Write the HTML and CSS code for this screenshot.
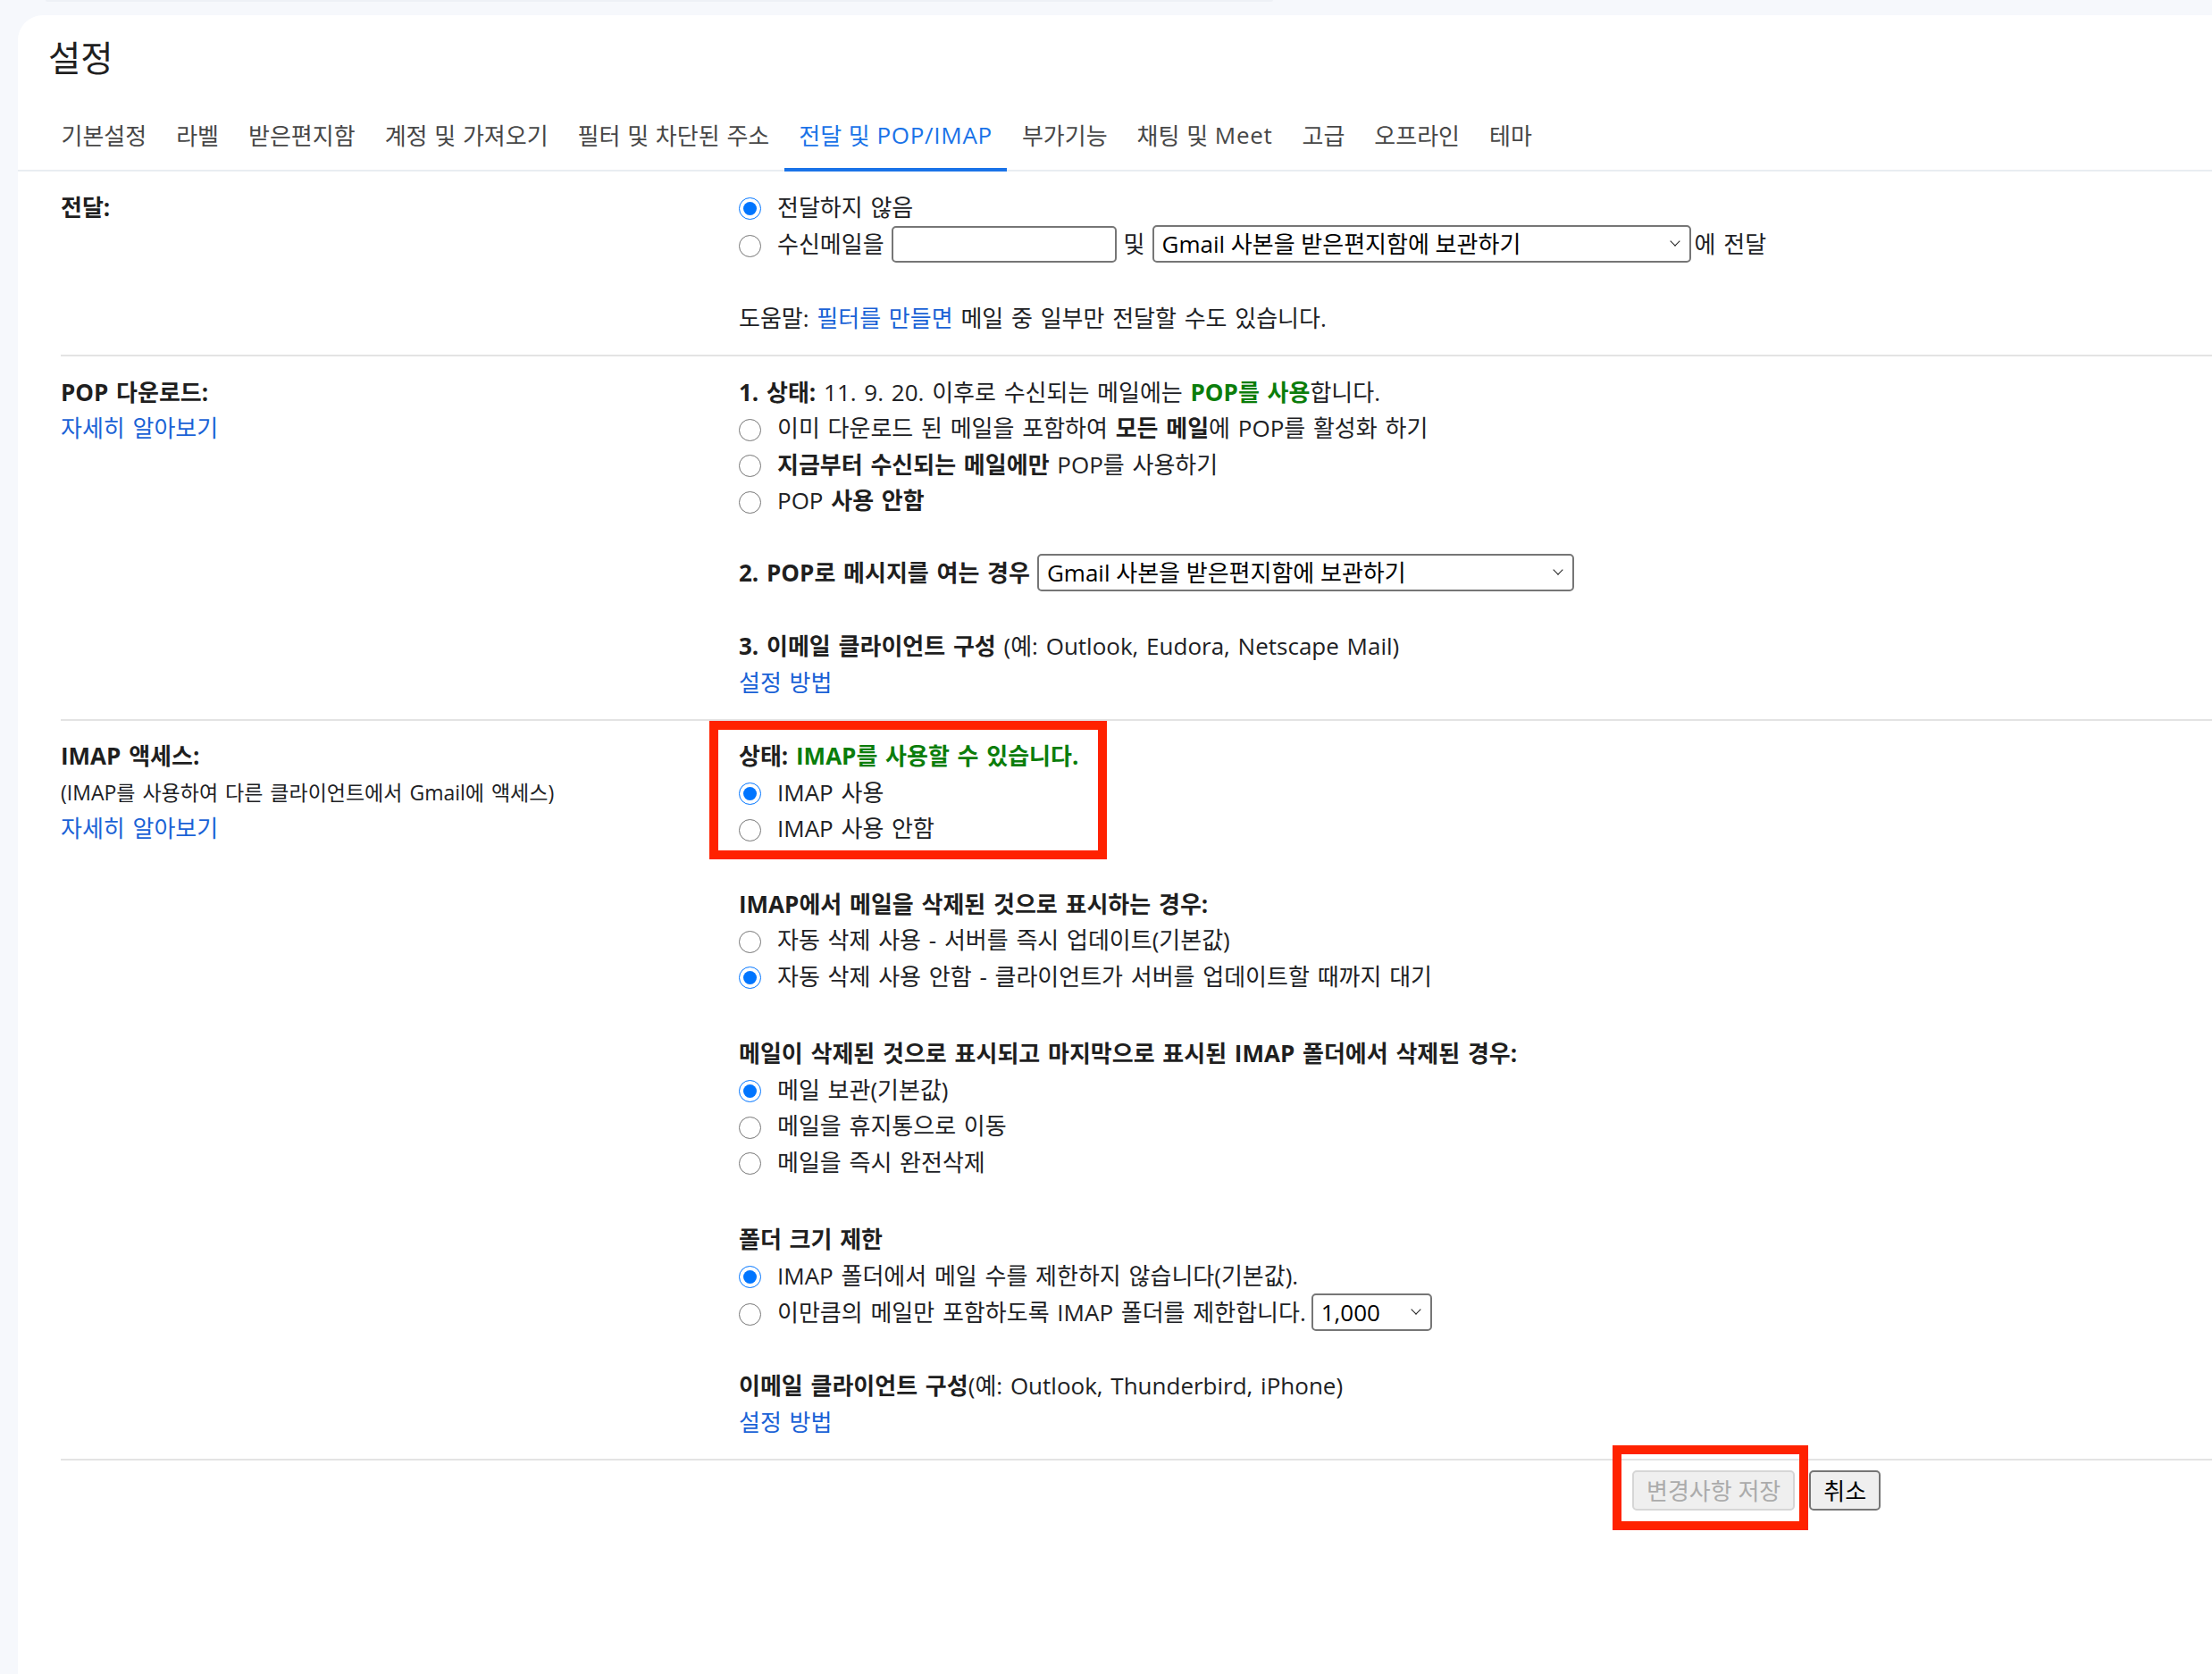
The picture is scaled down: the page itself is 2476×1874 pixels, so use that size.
FILE: index.html
```html
<!DOCTYPE html>
<html lang="ko">
<head>
<meta charset="utf-8">
<title>설정</title>
<link rel="stylesheet" href="styles.css">
</head>
<body>
<div class="topstrip"></div>
<main class="card">
  <h1 class="title">설정</h1>
  <nav class="tabs">
    <div class="tab">기본설정</div>
    <div class="tab">라벨</div>
    <div class="tab">받은편지함</div>
    <div class="tab">계정 및 가져오기</div>
    <div class="tab">필터 및 차단된 주소</div>
    <div class="tab active">전달 및 <span class="lat">POP/IMAP</span></div>
    <div class="tab">부가기능</div>
    <div class="tab">채팅 및 <span class="lat">Meet</span></div>
    <div class="tab">고급</div>
    <div class="tab">오프라인</div>
    <div class="tab">테마</div>
  </nav>

  <div class="content">
    <section class="section">
      <div class="label">
        <div class="line"><b>전달:</b></div>
      </div>
      <div class="field">
        <label class="opt"><input type="radio" name="fwd" checked><span>전달하지 않음</span></label>
        <label class="opt">
          <input type="radio" name="fwd">
          <span class="controls">
            <span>수신메일을</span>
            <input type="text" class="textbox">
            <span>및</span>
            <span class="select-wrap sel-fwd"><select><option>Gmail 사본을 받은편지함에 보관하기</option></select></span>
            <span class="tight">에 전달</span>
          </span>
        </label>
        <div class="line help">도움말: <a href="#">필터를 만들면</a> 메일 중 일부만 전달할 수도 있습니다.</div>
      </div>
    </section>

    <section class="section">
      <div class="label">
        <div class="line"><b>POP 다운로드:</b></div>
        <div class="line"><a href="#">자세히 알아보기</a></div>
      </div>
      <div class="field">
        <div class="group">
          <div class="line"><b>1. 상태:</b> 11. 9. 20. 이후로 수신되는 메일에는 <b class="green">POP를 사용</b>합니다.</div>
          <label class="opt"><input type="radio" name="pop"><span>이미 다운로드 된 메일을 포함하여 <b>모든 메일</b>에 POP를 활성화 하기</span></label>
          <label class="opt"><input type="radio" name="pop"><span><b>지금부터 수신되는 메일에만</b> POP를 사용하기</span></label>
          <label class="opt"><input type="radio" name="pop"><span>POP <b>사용 안함</b></span></label>
        </div>
        <div class="group gap-pop1">
          <div class="controls">
            <b>2. POP로 메시지를 여는 경우</b>
            <span class="select-wrap sel-pop"><select><option>Gmail 사본을 받은편지함에 보관하기</option></select></span>
          </div>
        </div>
        <div class="group gap-pop2">
          <div class="line"><b>3. 이메일 클라이언트 구성</b> (예: Outlook, Eudora, Netscape Mail)</div>
          <div class="line"><a href="#">설정 방법</a></div>
        </div>
      </div>
    </section>

    <section class="section imap">
      <div class="label">
        <div class="line"><b>IMAP 액세스:</b></div>
        <div class="line small">(IMAP를 사용하여 다른 클라이언트에서 Gmail에 액세스)</div>
        <div class="line"><a href="#">자세히 알아보기</a></div>
      </div>
      <div class="field">
        <div class="group">
          <div class="line"><b>상태: <span class="green">IMAP를 사용할 수 있습니다.</span></b></div>
          <label class="opt"><input type="radio" name="imap" checked><span>IMAP 사용</span></label>
          <label class="opt"><input type="radio" name="imap"><span>IMAP 사용 안함</span></label>
        </div>
        <div class="group gap-imap1">
          <div class="line"><b>IMAP에서 메일을 삭제된 것으로 표시하는 경우:</b></div>
          <label class="opt"><input type="radio" name="exp"><span>자동 삭제 사용 - 서버를 즉시 업데이트(기본값)</span></label>
          <label class="opt"><input type="radio" name="exp" checked><span>자동 삭제 사용 안함 - 클라이언트가 서버를 업데이트할 때까지 대기</span></label>
        </div>
        <div class="group gap-imap2">
          <div class="line"><b>메일이 삭제된 것으로 표시되고 마지막으로 표시된 IMAP 폴더에서 삭제된 경우:</b></div>
          <label class="opt"><input type="radio" name="del" checked><span>메일 보관(기본값)</span></label>
          <label class="opt"><input type="radio" name="del"><span>메일을 휴지통으로 이동</span></label>
          <label class="opt"><input type="radio" name="del"><span>메일을 즉시 완전삭제</span></label>
        </div>
        <div class="group gap-imap2">
          <div class="line"><b>폴더 크기 제한</b></div>
          <label class="opt"><input type="radio" name="lim" checked><span>IMAP 폴더에서 메일 수를 제한하지 않습니다(기본값).</span></label>
          <label class="opt">
            <input type="radio" name="lim">
            <span class="controls narrow">
              <span>이만큼의 메일만 포함하도록 IMAP 폴더를 제한합니다.</span>
              <span class="select-wrap sel-num"><select><option>1,000</option></select></span>
            </span>
          </label>
        </div>
        <div class="group gap-imap3">
          <div class="line"><b>이메일 클라이언트 구성</b>(예: Outlook, Thunderbird, iPhone)</div>
          <div class="line"><a href="#">설정 방법</a></div>
        </div>
      </div>
      <div class="highlight highlight-imap"></div>
    </section>

    <div class="actions">
      <span class="save-wrap">
        <button class="btn" disabled>변경사항 저장</button>
        <span class="highlight highlight-save"></span>
      </span>
      <button class="btn btn-cancel">취소</button>
    </div>
  </div>
</main>
</body>
</html>
```

FILE: styles.css
```css
html, body {
  margin: 0;
  padding: 0;
  overflow: hidden;
}

body {
  background: #f6f8fc;
  font-family: "Open Sans", "Noto Sans CJK KR", sans-serif;
  font-size: 26px;
  word-spacing: 2px;
  color: #202124;
}

.topstrip {
  margin-left: 51px;
  width: 1374px;
  height: 2px;
  background: #eef1f6;
  border-radius: 0 0 8px 8px;
}

.card {
  margin: 15px 0 0 20px;
  background: #ffffff;
  border-top-left-radius: 28px;
  min-height: calc(100vh - 17px);
}

.title {
  margin: 0;
  padding: 21px 0 0 34px;
  font-size: 39.5px;
  line-height: 50px;
  font-weight: 400;
  color: #1f1f1f;
  font-family: "Noto Sans CJK KR", sans-serif;
}

.tabs {
  display: flex;
  margin-top: 24px;
  padding-left: 32px;
  height: 80px;
  box-sizing: border-box;
  border-bottom: 2px solid #e9edf2;
}

.tab {
  position: relative;
  display: flex;
  align-items: center;
  padding: 0 16.5px;
  font-size: 26px;
  word-spacing: 1px;
  color: #474747;
  white-space: pre;
}

.tab .lat {
  letter-spacing: 0.7px;
}

.tab.active {
  color: #1a73e8;
}

.tab.active::after {
  content: "";
  position: absolute;
  left: 0;
  right: 0;
  bottom: -2px;
  height: 4px;
  background: #1a73e8;
}

.content {
  padding-left: 48px;
}

.section {
  position: relative;
  display: grid;
  grid-template-columns: 759px 1fr;
  padding: 19.5px 0 20.5px;
  border-top: 2px solid #e3e3e3;
}

.section:first-child {
  border-top: 0;
}

.line {
  line-height: 40.5px;
  white-space: nowrap;
}

.label b,
.field b {
  font-weight: 700;
  color: #1f1f1f;
}

.small {
  font-size: 23px;
}

a {
  color: #1a62d6;
  text-decoration: none;
}

.green,
.field b.green {
  color: #0b7d0b;
}

.opt {
  display: flex;
  align-items: center;
  gap: 18px;
  min-height: 40.5px;
  line-height: 40.5px;
  white-space: nowrap;
}

.opt input[type="radio"] {
  width: 25px;
  height: 25px;
  margin: 4px 0 0 0;
  flex: none;
}

.controls {
  display: flex;
  align-items: center;
  gap: 8px;
  white-space: nowrap;
  line-height: 40.5px;
}

.controls.narrow {
  gap: 6px;
}

.tight {
  margin-left: -4px;
}

.help {
  margin-top: 42px;
}

.gap-pop1 {
  margin-top: 39.5px;
}

.gap-pop2 {
  margin-top: 41px;
}

.gap-imap1 {
  margin-top: 44px;
}

.gap-imap2 {
  margin-top: 46px;
}

.gap-imap3 {
  margin-top: 41px;
}

.textbox {
  width: 252px;
  height: 41px;
  box-sizing: border-box;
  border: 2px solid #767676;
  border-radius: 5px;
  background: #fff;
  font: inherit;
}

.select-wrap {
  position: relative;
  display: inline-block;
  height: 42px;
}

.select-wrap select {
  appearance: none;
  -webkit-appearance: none;
  width: 100%;
  height: 42px;
  box-sizing: border-box;
  border: 2px solid #767676;
  border-radius: 5px;
  background: #fff;
  color: #000;
  font-family: "Open Sans", "Noto Sans CJK KR", sans-serif;
  font-size: 26px;
  padding: 0 30px 0 9px;
}

.select-wrap::after {
  content: "";
  position: absolute;
  right: 14px;
  top: calc(50% - 7px);
  width: 7px;
  height: 7px;
  border-right: 1.5px solid #222;
  border-bottom: 1.5px solid #222;
  transform: rotate(45deg);
  pointer-events: none;
}

.sel-fwd {
  width: 603px;
}

.sel-pop {
  width: 601px;
}

.sel-num {
  width: 135px;
}

.actions {
  display: flex;
  gap: 16px;
  border-top: 2px solid #e3e3e3;
  padding: 11px 0 0 1759px;
}

.save-wrap {
  position: relative;
  display: inline-block;
}

.btn {
  height: 45px;
  padding: 0 14px;
  font-family: "Open Sans", "Noto Sans CJK KR", sans-serif;
  font-size: 26px;
  background: #efefef;
  color: #000;
  border: 2px solid #767676;
  border-radius: 5px;
}

.btn:disabled {
  color: #ababab;
  border-color: #d6d6d6;
  background: #efefef;
}

.highlight {
  position: absolute;
  box-sizing: border-box;
  border: 10px solid #ff2200;
  pointer-events: none;
}

.highlight-imap {
  left: 726px;
  top: 0;
  width: 445px;
  height: 155px;
}

.highlight-save {
  left: -22px;
  top: -28px;
  width: 219px;
  height: 95px;
}
```
